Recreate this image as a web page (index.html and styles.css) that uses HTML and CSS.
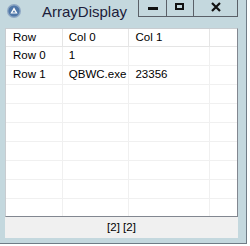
FILE: index.html
```html
<!DOCTYPE html>
<html lang="en">
<head>
    <meta charset="UTF-8">
    <title>ArrayDisplay</title>
    <link rel="stylesheet" href="styles.css">
</head>
<body>
    <div class="window">
        <div class="title-bar">
            <svg class="app-icon" width="14" height="14" viewBox="0 0 14 14">
                <circle cx="7" cy="7" r="7" fill="#8fa8c4"></circle>
                <circle cx="7" cy="7" r="5.6" fill="#4f77a8"></circle>
                <polygon points="7,3.2 10.6,9.6 3.4,9.6" fill="#ffffff"></polygon>
                <polygon points="7,6.2 8.6,8.6 5.4,8.6" fill="#4f77a8"></polygon>
            </svg>
            <div class="title">ArrayDisplay</div>
            <div class="caption-buttons">
                <div class="caption-btn">
                    <svg width="27" height="15" viewBox="0 0 27 15"><rect x="9" y="7" width="10" height="3" fill="#111"></rect></svg>
                </div>
                <div class="caption-btn">
                    <svg width="26" height="15" viewBox="0 0 26 15"><rect x="9" y="4" width="7" height="5" fill="none" stroke="#111" stroke-width="2"></rect></svg>
                </div>
                <div class="caption-btn close">
                    <svg width="43" height="15" viewBox="0 0 43 15"><path d="M18 3 L26 11 M26 3 L18 11" stroke="#111" stroke-width="2.2"></path></svg>
                </div>
            </div>
        </div>

        <div class="content">
            <div class="list-view">
                <div class="row header">
                    <div class="cell c0">Row</div>
                    <div class="cell c1">Col 0</div>
                    <div class="cell c2">Col 1</div>
                    <div class="cell c3"></div>
                </div>
                <div class="row">
                    <div class="cell c0">Row 0</div>
                    <div class="cell c1">1</div>
                    <div class="cell c2"></div>
                    <div class="cell c3"></div>
                </div>
                <div class="row">
                    <div class="cell c0">Row 1</div>
                    <div class="cell c1">QBWC.exe</div>
                    <div class="cell c2">23356</div>
                    <div class="cell c3"></div>
                </div>
                <div class="row"><div class="cell c0"></div><div class="cell c1"></div><div class="cell c2"></div><div class="cell c3"></div></div>
                <div class="row"><div class="cell c0"></div><div class="cell c1"></div><div class="cell c2"></div><div class="cell c3"></div></div>
                <div class="row"><div class="cell c0"></div><div class="cell c1"></div><div class="cell c2"></div><div class="cell c3"></div></div>
                <div class="row"><div class="cell c0"></div><div class="cell c1"></div><div class="cell c2"></div><div class="cell c3"></div></div>
                <div class="row"><div class="cell c0"></div><div class="cell c1"></div><div class="cell c2"></div><div class="cell c3"></div></div>
                <div class="row"><div class="cell c0"></div><div class="cell c1"></div><div class="cell c2"></div><div class="cell c3"></div></div>
                <div class="row"><div class="cell c0"></div><div class="cell c1"></div><div class="cell c2"></div><div class="cell c3"></div></div>
            </div>
            <div class="status-bar">[2] [2]</div>
        </div>
    </div>
</body>
</html>
```

FILE: styles.css
```css
* {
    margin: 0;
    padding: 0;
    box-sizing: border-box;
}

body {
    background: #ffffff;
    font-family: 'Liberation Sans', Arial, sans-serif;
}

.window {
    width: 247px;
    height: 244px;
    background: #c4d8de;
    border-right: 1px solid #6f7c86;
    border-bottom: 1px solid #6f7c86;
    display: flex;
    flex-direction: column;
}

.title-bar {
    height: 28px;
    display: flex;
    align-items: flex-start;
}

.app-icon {
    margin: 4px 0 0 7px;
}

.title {
    margin: 3px 0 0 21px;
    font-size: 15px;
    line-height: 18px;
    color: #1c1c3a;
}

.caption-buttons {
    margin-left: auto;
    margin-right: 8px;
    display: flex;
    height: 17px;
    border: 1px solid #5a6068;
    border-top: none;
}

.caption-btn {
    height: 16px;
    border-right: 1px solid #5a6068;
}

.caption-btn.close {
    border-right: none;
}

.content {
    margin: 0 8px 0 5px;
    display: flex;
    flex-direction: column;
}

.list-view {
    height: 189px;
    background: #ffffff;
    border-top: 1px solid #c8ccd0;
    border-left: 1px solid #c8ccd0;
    border-right: 1px solid #828790;
    border-bottom: 1px solid #828790;
    overflow: hidden;
}

.row {
    display: flex;
    height: 19px;
    border-bottom: 1px solid #f0f0f0;
}

.row.header {
    height: 18px;
    border-bottom: 1px solid #e5e5e5;
}

.cell {
    height: 100%;
    padding-left: 6px;
    font-size: 11.5px;
    line-height: 17px;
    color: #000000;
    white-space: nowrap;
    border-right: 1px solid #f0f0f0;
}

.header .cell {
    border-right: 1px solid #e5e5e5;
}

.c0 { width: 57px; padding-left: 7px; }
.c1 { width: 67px; }
.c2 { width: 81px; }
.c3 { width: 27px; border-right: none; }

.header .c3 { border-right: none; }

.status-bar {
    height: 21px;
    background: #f0f0f0;
    text-align: center;
    font-size: 11.5px;
    line-height: 20px;
    color: #000000;
}
```
